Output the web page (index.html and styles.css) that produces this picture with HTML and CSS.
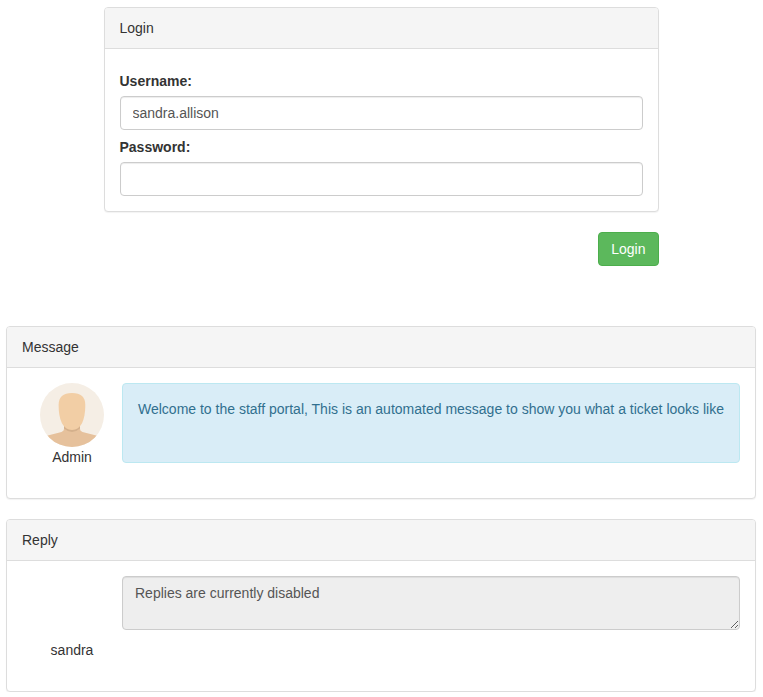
FILE: index.html
```html
<!DOCTYPE html>
<html lang="en">
<head>
<meta charset="utf-8">
<title>Staff portal</title>
<link rel="stylesheet" href="styles.css">
</head>
<body>
<form class="login">
  <section class="panel">
    <div class="panel-heading">Login</div>
    <div class="panel-body login-body">
      <label for="username">Username:</label>
      <input class="form-control" id="username" type="text" value="sandra.allison">
      <label for="password">Password:</label>
      <input class="form-control" id="password" type="password">
    </div>
  </section>
  <button class="btn" type="button">Login</button>
</form>
<main class="ticket">
  <section class="panel">
    <div class="panel-heading">Message</div>
    <div class="panel-body row">
      <div class="author">
        <svg class="avatar" viewBox="0 0 64 64" aria-hidden="true">
          <clipPath id="circle"><circle cx="32" cy="32" r="32"/></clipPath>
          <g clip-path="url(#circle)">
            <path fill="#f5eee5" d="M0 0h64v64H0z"/>
            <path fill="#e6c19c" d="M0 54.500 21.500 49Q24 48.200 24 46V40H40V46Q40 48.200 42.500 49L64 54.500V64H0z"/>
            <path fill="#d4b08c" d="M24 42V45.500Q28 49 32 49T40 45.500V42z"/>
            <path fill="#f2cea5" d="M32 10C41 10 45.300 14 45.300 22C45.300 37 41 47 32 47S18.600 37 18.600 22C18.600 14 23 10 32 10z"/>
          </g>
        </svg>
        <div>Admin</div>
      </div>
      <div class="alert">Welcome to the staff portal, This is an automated message to show you what a ticket looks like</div>
    </div>
  </section>
  <section class="panel">
    <div class="panel-heading">Reply</div>
    <div class="panel-body row">
      <div class="author"><div class="avatar"></div><div>sandra</div></div>
      <textarea class="form-control reply" disabled>Replies are currently disabled</textarea>
    </div>
  </section>
</main>
</body>
</html>
```
FILE: styles.css
```css
* { box-sizing: border-box; }
body {
  margin: 0;
  padding-top: 7px;
  font: 14px/20px "Liberation Sans", Arial, sans-serif;
  color: #333;
  background: #fff;
}
.login {
  display: flex;
  flex-direction: column;
  width: 555px;
  margin: 0 0 60px 103.5px;
}
.ticket { margin: 0 7px 0 6px; }
.panel {
  margin-bottom: 20px;
  border: 1px solid #ddd;
  border-radius: 4px;
  background: #fff;
  box-shadow: 0 1px 1px rgba(0, 0, 0, .05);
}
.ticket .panel:last-child { margin-bottom: 0; }
.panel-heading {
  padding: 10px 15px;
  border-bottom: 1px solid #ddd;
  border-radius: 3px 3px 0 0;
  background: #f5f5f5;
}
.panel-body { padding: 15px; }
.login-body { padding-top: 22px; }
label {
  display: block;
  margin-bottom: 5px;
  font-weight: 700;
}
.form-control {
  display: block;
  width: 100%;
  height: 34px;
  padding: 6px 12px;
  border: 1px solid #ccc;
  border-radius: 4px;
  font: inherit;
  color: #555;
  background: #fff;
  box-shadow: inset 0 1px 1px rgba(0, 0, 0, .075);
}
.form-control + label { margin-top: 7px; }
.btn {
  align-self: flex-end;
  padding: 6px 12px;
  border: 1px solid #4cae4c;
  border-radius: 4px;
  font: inherit;
  color: #fff;
  background: #5cb85c;
}
.row {
  display: flex;
  align-items: flex-start;
  height: 130px;
}
.author {
  flex: 0 0 100px;
  text-align: center;
}
.avatar {
  display: block;
  width: 64px;
  height: 64px;
  margin: 0 auto;
}
.alert {
  flex: 1;
  height: 80px;
  padding: 15px;
  border: 1px solid #bce8f1;
  border-radius: 4px;
  color: #31708f;
  background: #d9edf7;
}
.reply {
  flex: 1;
  height: 54px;
  background: #eee;
}
```
